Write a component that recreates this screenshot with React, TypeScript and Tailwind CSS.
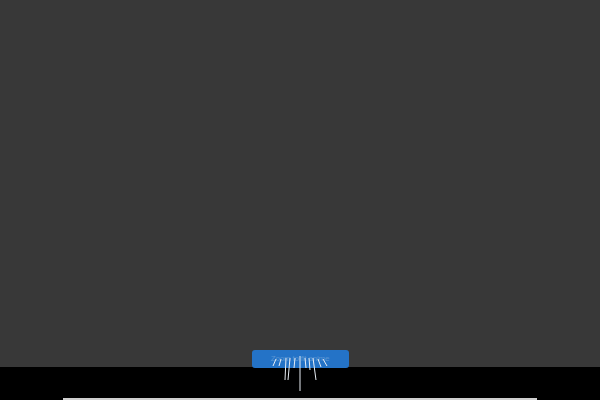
import React from 'react'

// ray segments relative to the svg origin at (252, 356)
const RAYS: [number, number, number, number][] = [
  [24, 3, 21, 10],
  [29, 3, 27, 10],
  [34, 2, 33, 24],
  [38, 2, 36, 24],
  [43, 2, 42, 12],
  [48, 0, 48, 35],
  [53, 2, 54, 12],
  [57, 2, 58, 14],
  [61, 2, 64, 24],
  [66, 3, 69, 11],
  [71, 3, 75, 10],
]

export default function App() {
  return (
    <div className="w-[600px] h-[400px] flex flex-col bg-black overflow-hidden" style={{ fontFamily: '"Liberation Sans", Arial, sans-serif' }}>
      <div className="h-[367px] bg-[#383838] flex flex-col justify-end items-center">
        <div className="relative w-[97px] h-[18px] mb-[-1px] rounded-[3px] bg-[#2473c7] flex items-center justify-center">
          <span className="text-[8px] text-[#5a95d3] tracking-tight whitespace-nowrap">Zoom to fit anime</span>
        </div>
      </div>
      <div className="relative flex-1 flex flex-col justify-end items-center">
        <svg className="absolute left-[252px] top-[-11px]" width="96" height="44" viewBox="0 0 96 44">
          {RAYS.map(([x1, y1, x2, y2], i) => (
            <line key={i} x1={x1} y1={y1} x2={x2} y2={y2} stroke="#e8eef5" strokeWidth="1" />
          ))}
        </svg>
        <div className="w-[474px] h-[2px] bg-[#cfcfcf]" />
      </div>
    </div>
  )
}
